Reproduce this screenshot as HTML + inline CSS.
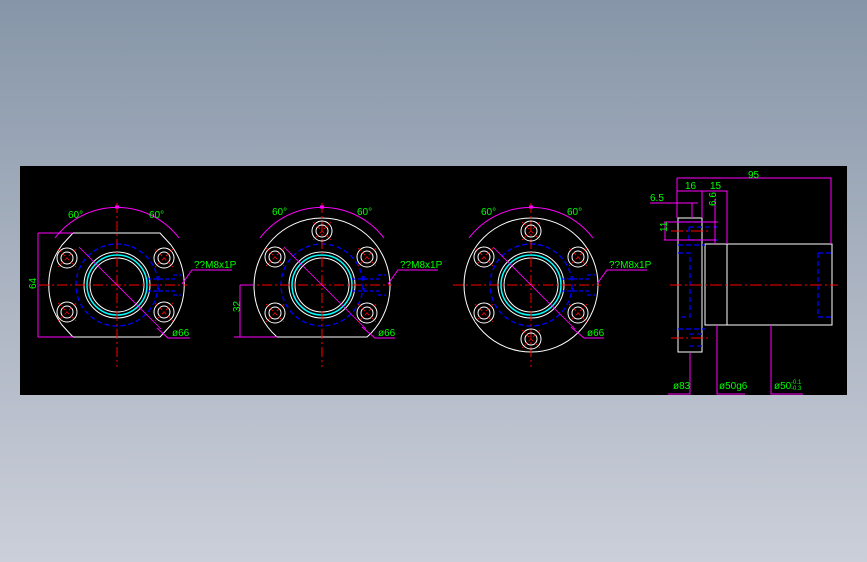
<!DOCTYPE html>
<html><head><meta charset="utf-8"><style>
html,body{margin:0;padding:0}
body{width:867px;height:562px;background:linear-gradient(#8696a8,#aeb6c4 55%,#cbcfd9);overflow:hidden;position:relative}
svg{position:absolute;left:0;top:0}
text{font-family:"Liberation Sans",sans-serif;fill:#00ff00;font-size:10px}
</style></head><body>
<svg width="867" height="562" viewBox="0 0 867 562">
<defs>
<g id="hole">
 <circle r="10" fill="none" stroke="#fff" stroke-width="1"/>
 <circle r="6" fill="none" stroke="#fff" stroke-width="1"/>
 <path d="M-9 -9L9 9M9 -9L-9 9" stroke="#f00" stroke-width="0.8" stroke-dasharray="4 2"/>
</g>
<g id="core">
 <circle r="41" fill="none" stroke="#00f" stroke-width="1.3" stroke-dasharray="5 3"/>
 <circle r="33" fill="none" stroke="#fff" stroke-width="1"/>
 <circle r="30" fill="none" stroke="#0ff" stroke-width="1.5"/>
 <circle r="27" fill="none" stroke="#fff" stroke-width="1"/>
 <path d="M-78 0H70M0 -82V82" stroke="#f00" stroke-width="1" stroke-dasharray="10 3 2 3"/>
 <path d="M30 -6H58M30 6H58M42 -9V-3M42 3V9M56 -10H64M56 10H64" stroke="#00f" stroke-width="1.3" stroke-dasharray="4 2"/>
 <path d="M-38 -38L44 44" stroke="#f0f" stroke-width="0.8"/>
 <path d="M-62 -47A78 78 0 0 1 62 -47" fill="none" stroke="#f0f" stroke-width="1"/>
 <path d="M-2 -78H2" stroke="#f0f" stroke-width="3"/>
</g>
</defs>
<rect x="20" y="166" width="827" height="229" fill="#000"/>

<!-- view 1 -->
<g transform="translate(117,285)">
 <path d="M-44 -52H43L54 -40A67 67 0 0 1 54 40L43 52H-44L-55 40A67 67 0 0 1 -55 -40Z" fill="none" stroke="#fff" stroke-width="1"/>
 <use href="#core"/>
 <use href="#hole" x="-50" y="-27"/><use href="#hole" x="47" y="-27"/>
 <use href="#hole" x="-50" y="27"/><use href="#hole" x="47" y="27"/>
</g>
<path d="M38 233V319M38 233H73M38 337H73M38 319V337" stroke="#f0f" stroke-width="1" fill="none"/>
<path d="M38 233V337" stroke="#f0f"/>
<text x="33" y="292" transform="rotate(-90 33 289)">64</text>
<text x="68" y="218">60°</text><text x="149" y="218">60°</text>
<path d="M182 284L192 270H232" stroke="#f0f" fill="none"/>
<text x="194" y="268">??M8x1P</text>
<path d="M157 328L168 338H190" stroke="#f0f" fill="none"/>
<text x="172" y="336">ø66</text>

<!-- view 2 -->
<g transform="translate(322,285)">
 <path d="M-45 52H45A68 68 0 1 0 -45 52Z" fill="none" stroke="#fff" stroke-width="1"/>
 <use href="#core"/>
 <use href="#hole" x="0" y="-54"/>
 <use href="#hole" x="-47" y="-28"/><use href="#hole" x="45" y="-28"/>
 <use href="#hole" x="-47" y="28"/><use href="#hole" x="45" y="28"/>
</g>
<path d="M240 285V337M240 285H254M234 337H277" stroke="#f0f" fill="none"/>
<text x="236" y="316" transform="rotate(-90 236 312)">32</text>
<text x="272" y="215">60°</text><text x="357" y="215">60°</text>
<path d="M388 284L398 270H438" stroke="#f0f" fill="none"/>
<text x="400" y="268">??M8x1P</text>
<path d="M362 327L375 338H395" stroke="#f0f" fill="none"/>
<text x="378" y="336">ø66</text>

<!-- view 3 -->
<g transform="translate(531,285)">
 <circle r="67" fill="none" stroke="#fff" stroke-width="1"/>
 <use href="#core"/>
 <use href="#hole" x="0" y="-54"/><use href="#hole" x="0" y="54"/>
 <use href="#hole" x="-47" y="-28"/><use href="#hole" x="47" y="-28"/>
 <use href="#hole" x="-47" y="28"/><use href="#hole" x="47" y="28"/>
</g>
<text x="481" y="215">60°</text><text x="567" y="215">60°</text>
<path d="M597 284L607 270H647" stroke="#f0f" fill="none"/>
<text x="609" y="268">??M8x1P</text>
<path d="M571 327L584 338H604" stroke="#f0f" fill="none"/>
<text x="587" y="336">ø66</text>

<!-- side view -->
<g fill="none" stroke-width="1">
 <path d="M678 218H702V352H678Z" stroke="#fff"/>
 <path d="M705 244H832V325H705ZM727 244V325" stroke="#fff"/>
 <path d="M678 222H705M689 227H718M689 240H718M678 245H705M689 227V240M678 253H690V317H678M678 329H705M689 334H705M689 346H705M818 253H831M818 253V317H831" stroke="#00f" stroke-width="1.3" stroke-dasharray="5 3"/>
 <path d="M670 285H838M672 231H710M672 338H708" stroke="#f0f" stroke-width="0" />
 <path d="M670 285H838M671 231H709M671 338H708" stroke="#f00" stroke-dasharray="12 3 2 3"/>
 <path d="M677 178H831V244M677 178V218M677 191H727V244M702 191V218M650 203H698M692 203V218M715 199V244M664 222H718M664 240H716M665 222V240" stroke="#f0f"/>
 <path d="M690 353V394H668M717 325V394H745M771 325V394H803" stroke="#f0f"/>
</g>
<text x="748" y="178">95</text>
<text x="685" y="189">16</text><text x="710" y="189">15</text>
<text x="650" y="201">6.5</text>
<text x="716" y="214" transform="rotate(-90 712 210)">6.6</text>
<text x="663" y="236" transform="rotate(-90 663 232)">11</text>
<text x="673" y="389">ø83</text>
<text x="719" y="389">ø50g6</text>
<text x="774" y="389">ø50</text><text x="791" y="384" style="font-size:6px">-0.1</text><text x="791" y="390" style="font-size:6px">-0.3</text>
</svg>
</body></html>
